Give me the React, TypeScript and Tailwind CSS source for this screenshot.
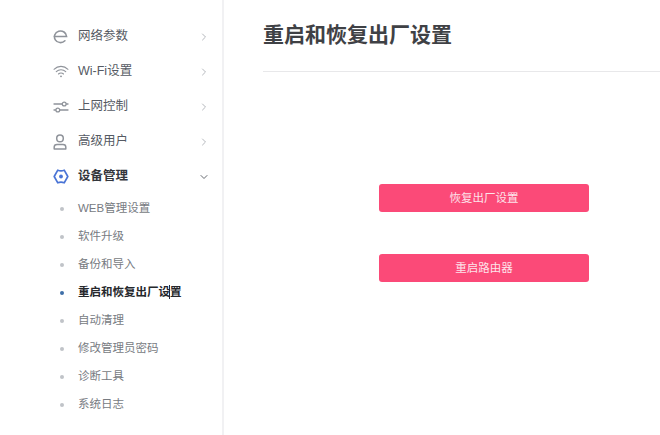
import { ChevronDown, ChevronRight } from "lucide-react";

const font = "font-['Liberation_Sans','Noto_Sans_CJK_SC',sans-serif]";

function NetIcon() {
  return (
    <svg width="15" height="15" viewBox="0 0 15 15" fill="none" stroke="#8f939a" strokeWidth="1.6" strokeLinecap="round">
      <path d="M1.2 7.5h12.4a6.1 5.8 0 1 0-1.7 4.3" />
    </svg>
  );
}

function WifiIcon() {
  return (
    <svg width="16" height="13" viewBox="0 0 17 14" fill="none" stroke="#8f939a" strokeWidth="1.2" strokeLinecap="round">
      <path d="M1 4.6a10.6 10.6 0 0 1 15 0" />
      <path d="M3.4 7.2a7.2 7.2 0 0 1 10.2 0" />
      <path d="M5.8 9.7a3.8 3.8 0 0 1 5.4 0" />
      <circle cx="8.5" cy="12.2" r="1" fill="#8f939a" stroke="none" />
    </svg>
  );
}

function SliderIcon() {
  return (
    <svg width="16" height="12" viewBox="0 0 16 12" fill="none" stroke="#8f939a" strokeWidth="1.3" strokeLinecap="round">
      <path d="M1 3h8M13.5 3H15M1 9h1.5M7 9h8" />
      <circle cx="11.2" cy="3" r="1.9" />
      <circle cx="4.8" cy="9" r="1.9" />
    </svg>
  );
}

function UserIcon() {
  return (
    <svg width="14" height="16" viewBox="0 0 14 16" fill="none" stroke="#8f939a" strokeWidth="1.5">
      <circle cx="7" cy="4.4" r="3.3" />
      <path d="M1.2 15v-2c0-1.5 1.2-2.6 2.8-2.6h6c1.6 0 2.8 1.1 2.8 2.6v2z" strokeLinejoin="round" />
    </svg>
  );
}

function GearIcon() {
  return (
    <svg width="16" height="17" viewBox="0 0 16 17" fill="none" stroke="#4a74d6" strokeWidth="1.7" strokeLinejoin="round">
      <path d="M4.8 2.2Q8 3.4 11.2 2.2L14.8 8.5 11.2 14.8Q8 13.6 4.8 14.8L1.2 8.5z" />
      <circle cx="8" cy="8.5" r="1.9" fill="#4a74d6" stroke="none" />
    </svg>
  );
}

const menu = [
  { label: "网络参数", icon: <NetIcon /> },
  { label: "Wi-Fi设置", icon: <WifiIcon /> },
  { label: "上网控制", icon: <SliderIcon /> },
  { label: "高级用户", icon: <UserIcon /> },
];

const sub = [
  "WEB管理设置",
  "软件升级",
  "备份和导入",
  "重启和恢复出厂设置",
  "自动清理",
  "修改管理员密码",
  "诊断工具",
  "系统日志",
];

export default function App() {
  return (
    <div className={`flex h-[435px] w-[660px] overflow-hidden bg-white ${font}`}>
      <aside className="h-full w-[224px] shrink-0 border-r-2 border-[#f1f1f3] pt-[19px]">
        {menu.map((m) => (
          <div key={m.label} className="flex h-[35px] items-center pl-[53px] pr-[12px]">
            <span className="flex w-[25px] shrink-0 items-center">{m.icon}</span>
            <span className="flex-1 text-[12.5px] text-[#555a63]">{m.label}</span>
            <ChevronRight size={12} className="text-[#b5b8bd]" />
          </div>
        ))}
        <div className="flex h-[35px] items-center pl-[53px] pr-[12px]">
          <span className="flex w-[25px] shrink-0 items-center">
            <GearIcon />
          </span>
          <span className="flex-1 text-[12.5px] font-bold text-[#33363c]">设备管理</span>
          <ChevronDown size={12} className="text-[#666a70]" />
        </div>
        <ul className="mt-[1px]">
          {sub.map((s, i) => (
            <li key={s} className="flex h-[28px] items-center pl-[60px]">
              <span className={`h-[4px] w-[4px] rounded-full ${i === 3 ? "bg-[#3f6fa8]" : "bg-[#c0c3c8]"}`} />
              <span
                className={`relative ml-[14px] text-[11.5px] ${i === 3 ? "font-bold text-[#26282c]" : "text-[#777b82]"}`}
              >
                {s}
                {/* text cursor caught in the screenshot */}
                {i === 3 && <span className="absolute left-[91px] top-[1px] h-[14px] w-px bg-[#1d2a44]" />}
              </span>
            </li>
          ))}
        </ul>
      </aside>
      <main className="flex-1 pl-[39px]">
        <h1 className="flex h-[72px] items-center border-b border-[#e8e8ea] pb-[2px] text-[21px] font-bold text-[#3f4145]">
          重启和恢复出厂设置
        </h1>
        <div className="flex flex-col gap-[42px] pl-[116px] pt-[112px]">
          <button className="h-[28px] w-[210px] rounded-[3px] bg-[#fb4a78] pt-[2px] text-[11.5px] text-[#fde4ea]">
            恢复出厂设置
          </button>
          <button className="h-[28px] w-[210px] rounded-[3px] bg-[#fb4a78] pt-[2px] text-[11.5px] text-[#fde4ea]">
            重启路由器
          </button>
        </div>
      </main>
    </div>
  );
}
